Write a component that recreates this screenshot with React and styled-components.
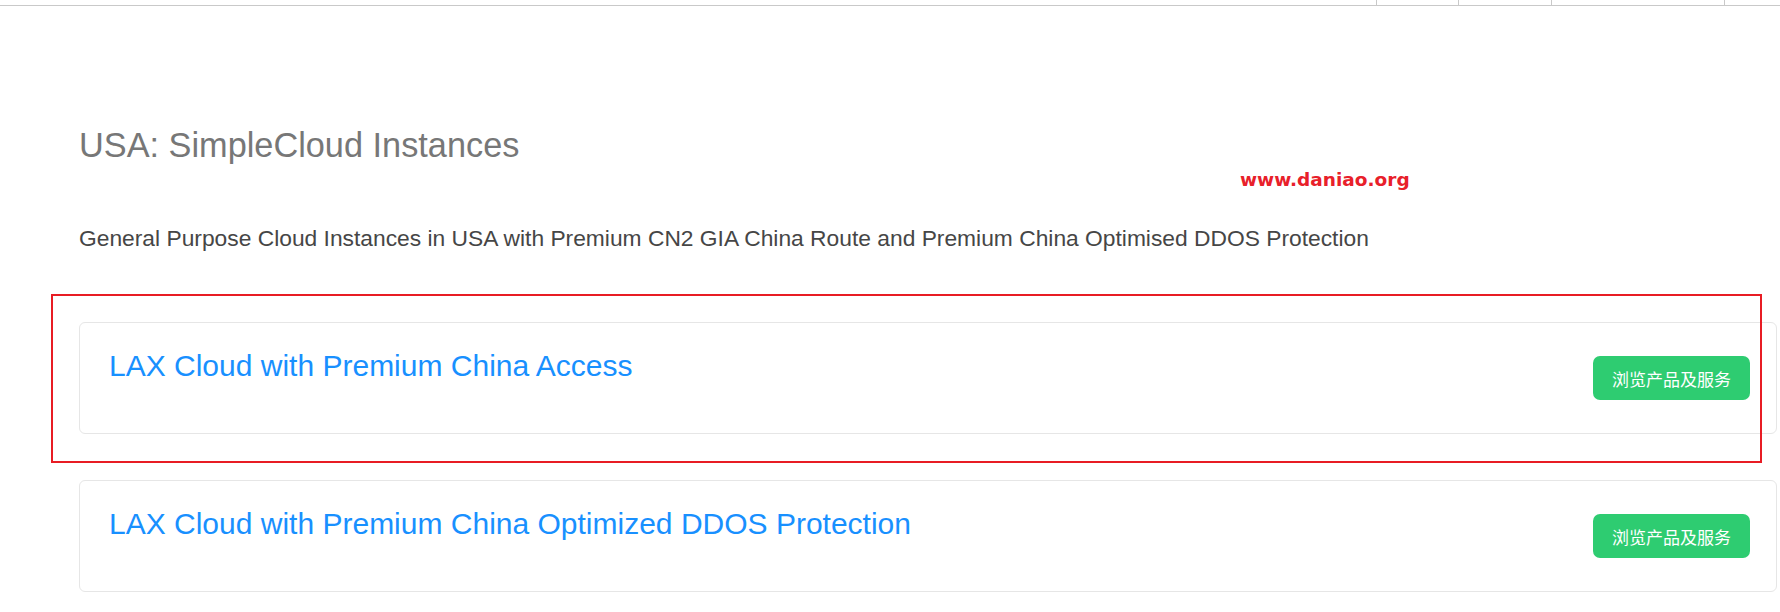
import React from 'react';
import styled, { createGlobalStyle } from 'styled-components';

const GlobalStyle = createGlobalStyle`
  html, body {
    margin: 0;
    padding: 0;
    background: #fff;
  }
  body {
    font-family: "Liberation Sans", Arial, sans-serif;
  }
`;

const Page = styled.div`
  position: relative;
  width: 1780px;
  min-height: 612px;
  overflow: hidden;
`;

const TopBar = styled.div`
  display: flex;
  height: 5px;
  border-bottom: 1px solid #c9c9c9;
`;

const TopSpacer = styled.div`
  flex: 1;
`;

const TopCell = styled.div`
  width: ${props => props.w}px;
  border-left: 1px solid #c9c9c9;
`;

const Content = styled.div`
  padding: 119px 3px 0 79px;
`;

const Heading = styled.h1`
  margin: 0;
  font-size: 34.3px;
  line-height: 41px;
  font-weight: 400;
  color: #777;
`;

const Intro = styled.p`
  margin: 56px 0 0;
  font-size: 22.8px;
  line-height: 33px;
  color: #464646;
`;

const ProductList = styled.div`
  display: flex;
  flex-direction: column;
  gap: 46px;
  margin-top: 67px;
`;

const Card = styled.div`
  box-sizing: border-box;
  height: 112px;
  display: flex;
  align-items: center;
  justify-content: space-between;
  padding: 0 26px 0 29px;
  border: 1px solid #e6e6e6;
  border-radius: 6px;
  background: #fff;
`;

const CardTitle = styled.h2`
  align-self: flex-start;
  margin: 25px 0 0;
  font-size: 30px;
  line-height: 36px;
  font-weight: 400;
  color: #1890ff;
`;

const BrowseButton = styled.button`
  box-sizing: border-box;
  height: 44px;
  padding: 0 19px;
  border: 0;
  border-radius: 7px;
  background: #2ecc71;
  color: #fff;
  font-family: "Noto Sans CJK SC", "Liberation Sans", sans-serif;
  font-size: 17px;
  cursor: pointer;
`;

const Watermark = styled.div`
  position: absolute;
  left: 1240px;
  top: 171px;
  font-family: "DejaVu Sans", sans-serif;
  font-weight: 700;
  font-size: 18.5px;
  line-height: 1;
  color: #e8202a;
`;

const Highlight = styled.div`
  position: absolute;
  left: 51px;
  top: 294px;
  width: 1711px;
  height: 169px;
  box-sizing: border-box;
  border: 2px solid #e81c24;
  pointer-events: none;
`;

const products = [
  'LAX Cloud with Premium China Access',
  'LAX Cloud with Premium China Optimized DDOS Protection',
];

export default function App() {
  return (
    <Page>
      <GlobalStyle />
      <TopBar>
        <TopSpacer />
        <TopCell w={81} />
        <TopCell w={92} />
        <TopCell w={172} />
        <TopCell w={55} />
      </TopBar>
      <Content>
        <Heading>USA: SimpleCloud Instances</Heading>
        <Intro>
          General Purpose Cloud Instances in USA with Premium CN2 GIA China Route and Premium China Optimised DDOS Protection
        </Intro>
        <ProductList>
          {products.map(name => (
            <Card key={name}>
              <CardTitle>{name}</CardTitle>
              <BrowseButton>浏览产品及服务</BrowseButton>
            </Card>
          ))}
        </ProductList>
      </Content>
      <Watermark>www.daniao.org</Watermark>
      <Highlight />
    </Page>
  );
}
